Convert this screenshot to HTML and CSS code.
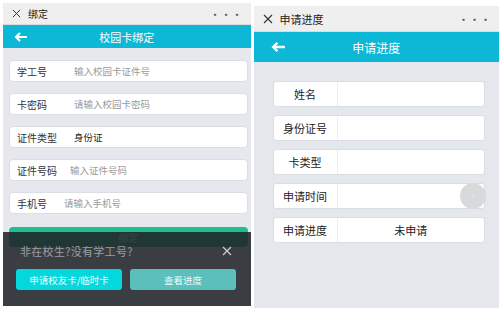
FILE: index.html
```html
<!DOCTYPE html>
<html lang="zh-CN">
<head>
  <meta charset="UTF-8">
  <title>校园卡绑定 / 申请进度</title>
  <link rel="stylesheet" href="styles.css">
</head>
<body>
  <div class="screens">
    <!-- left: bind screen -->
    <div class="phone phone-bind">
      <div class="titlebar">
        <svg class="close" viewBox="0 0 10 10" width="9" height="9"><path d="M1 1 L9 9 M9 1 L1 9" stroke="#333" stroke-width="1.1"/></svg>
        <span class="title">绑定</span>
        <span class="more">···</span>
      </div>
      <div class="header">
        <svg class="back" viewBox="0 0 14 10" width="14" height="10"><path d="M6 1 L2 5 L6 9 M2 5 H13" fill="none" stroke="#fff" stroke-width="2.2"/></svg>
        <span class="header-title">校园卡绑定</span>
      </div>
      <div class="form">
        <div class="field"><span class="label">学工号</span><span class="hint">输入校园卡证件号</span></div>
        <div class="field"><span class="label">卡密码</span><span class="hint">请输入校园卡密码</span></div>
        <div class="field"><span class="label">证件类型</span><span class="value">身份证</span></div>
        <div class="field"><span class="label">证件号码</span><span class="hint hint-near">输入证件号码</span></div>
        <div class="field"><span class="label">手机号</span><span class="hint hint-nearer">请输入手机号</span></div>
        <button class="bind">绑定</button>
      </div>
      <div class="sheet">
        <div class="sheet-top">
          <span class="sheet-text">非在校生?没有学工号?</span>
          <svg class="sheet-close" viewBox="0 0 10 10" width="10" height="10"><path d="M1 1 L9 9 M9 1 L1 9" stroke="#d0d0d4" stroke-width="1.2"/></svg>
        </div>
        <div class="sheet-actions">
          <button class="btn btn-apply">申请校友卡/临时卡</button>
          <button class="btn btn-check">查看进度</button>
        </div>
      </div>
    </div>

    <!-- right: progress screen -->
    <div class="phone phone-progress">
      <div class="titlebar">
        <svg class="close" viewBox="0 0 10 10" width="10" height="10"><path d="M1 1 L9 9 M9 1 L1 9" stroke="#333" stroke-width="1.1"/></svg>
        <span class="title">申请进度</span>
        <span class="more">···</span>
      </div>
      <div class="header">
        <svg class="back" viewBox="0 0 14 10" width="15" height="11"><path d="M6 1 L2 5 L6 9 M2 5 H13" fill="none" stroke="#fff" stroke-width="2.2"/></svg>
        <span class="header-title">申请进度</span>
      </div>
      <div class="table">
        <div class="row"><span class="cell-label">姓名</span><span class="cell-value"></span></div>
        <div class="row"><span class="cell-label">身份证号</span><span class="cell-value"></span></div>
        <div class="row"><span class="cell-label">卡类型</span><span class="cell-value"></span></div>
        <div class="row"><span class="cell-label">申请时间</span><span class="cell-value"></span><span class="float-btn"><svg viewBox="0 0 10 10" width="8" height="8"><path d="M3 1 L7 5 L3 9" fill="none" stroke="#eee" stroke-width="1"/></svg></span></div>
        <div class="row"><span class="cell-label">申请进度</span><span class="cell-value">未申请</span></div>
      </div>
    </div>
  </div>
</body>
</html>
```

FILE: styles.css
```css
body {
  margin: 0;
  background: #fff;
  font-family: "Noto Sans CJK SC", "Noto Sans", sans-serif;
}
.screens {
  display: flex;
  align-items: flex-start;
  gap: 3px;
  padding: 3px 2px 0 3px;
}
.phone {
  position: relative;
  display: flex;
  flex-direction: column;
  overflow: hidden;
}
.phone-bind {
  width: 248px;
  height: 303px;
  background: #e6e8ed;
}
.phone-progress {
  width: 246px;
  height: 302px;
  margin-top: 3px;
  background: #e4e7eb;
}
.titlebar {
  display: flex;
  align-items: center;
  background: #efefef;
  color: #222;
  border-bottom: 1px solid #dcdcdc;
}
.phone-bind .titlebar {
  height: 21px;
  padding: 0 8px 0 9px;
  font-size: 10px;
}
.phone-progress .titlebar {
  height: 25px;
  padding: 0 8px 0 9px;
  font-size: 11px;
}
.close {
  margin-right: 7px;
  flex: none;
}
.title {
  flex: 1;
}
.more {
  font-size: 11px;
  letter-spacing: 0;
  color: #555;
}
.header {
  position: relative;
  display: flex;
  align-items: center;
  justify-content: center;
  background: #0cb8d6;
  color: #fff;
}
.phone-bind .header {
  height: 23px;
  font-size: 11px;
}
.phone-progress .header {
  height: 30px;
  font-size: 12px;
}
.back {
  position: absolute;
  left: 11px;
  top: 50%;
  transform: translateY(-50%);
}
.phone-progress .back {
  left: 17px;
}
.form {
  display: flex;
  flex-direction: column;
  gap: 11px;
  padding: 12px 3px 0 6px;
}
.field {
  display: flex;
  align-items: center;
  height: 22px;
  background: #fff;
  border: 1px solid #dcdee3;
  border-radius: 4px;
  box-sizing: border-box;
  font-size: 10px;
}
.label {
  width: 51px;
  padding-left: 7px;
  color: #333;
  flex: none;
  box-sizing: border-box;
}
.hint {
  color: #9a9a9a;
  font-size: 9.5px;
  margin-left: 13px;
}
.hint-near {
  margin-left: 9px;
}
.hint-nearer {
  margin-left: 3px;
}
.value {
  margin-left: 13px;
  color: #222;
  font-size: 9.5px;
}
.bind {
  height: 20px;
  margin-top: 2px;
  border: none;
  border-radius: 4px;
  background: #1ebf8e;
  color: #fff;
  font-family: inherit;
  font-size: 10px;
}
.sheet {
  position: absolute;
  left: 0;
  right: 0;
  top: 229px;
  bottom: 0;
  background: rgba(34, 36, 42, 0.88);
  padding: 0 12px 0 13px;
}
.sheet-top {
  display: flex;
  align-items: center;
  justify-content: space-between;
  height: 37px;
}
.sheet-text {
  color: #9c9ea3;
  font-size: 11px;
  letter-spacing: 0.3px;
  padding-left: 4px;
}
.sheet-close {
  margin-right: 7px;
}
.sheet-actions {
  display: flex;
  gap: 8px;
}
.btn {
  height: 21px;
  width: 106px;
  border: none;
  border-radius: 3px;
  color: #eefafa;
  font-family: inherit;
  font-size: 9.5px;
  padding: 0;
}
.btn-apply {
  background: #03d8dd;
}
.btn-check {
  background: #5cbfbc;
}
.table {
  display: flex;
  flex-direction: column;
  gap: 8px;
  padding: 19px 14px 0 19px;
}
.row {
  position: relative;
  display: flex;
  height: 26px;
  background: #fff;
  border: 1px solid #dadde2;
  border-radius: 3px;
  box-sizing: border-box;
  font-size: 11px;
  color: #222;
}
.cell-label {
  width: 63px;
  flex: none;
  display: flex;
  align-items: center;
  justify-content: center;
  border-right: 1px solid #eceef1;
}
.cell-value {
  flex: 1;
  display: flex;
  align-items: center;
  justify-content: center;
}
.float-btn {
  position: absolute;
  right: -2px;
  top: -1px;
  width: 26px;
  height: 26px;
  border-radius: 50%;
  background: #d8d9db;
  display: flex;
  align-items: center;
  justify-content: center;
}
```
